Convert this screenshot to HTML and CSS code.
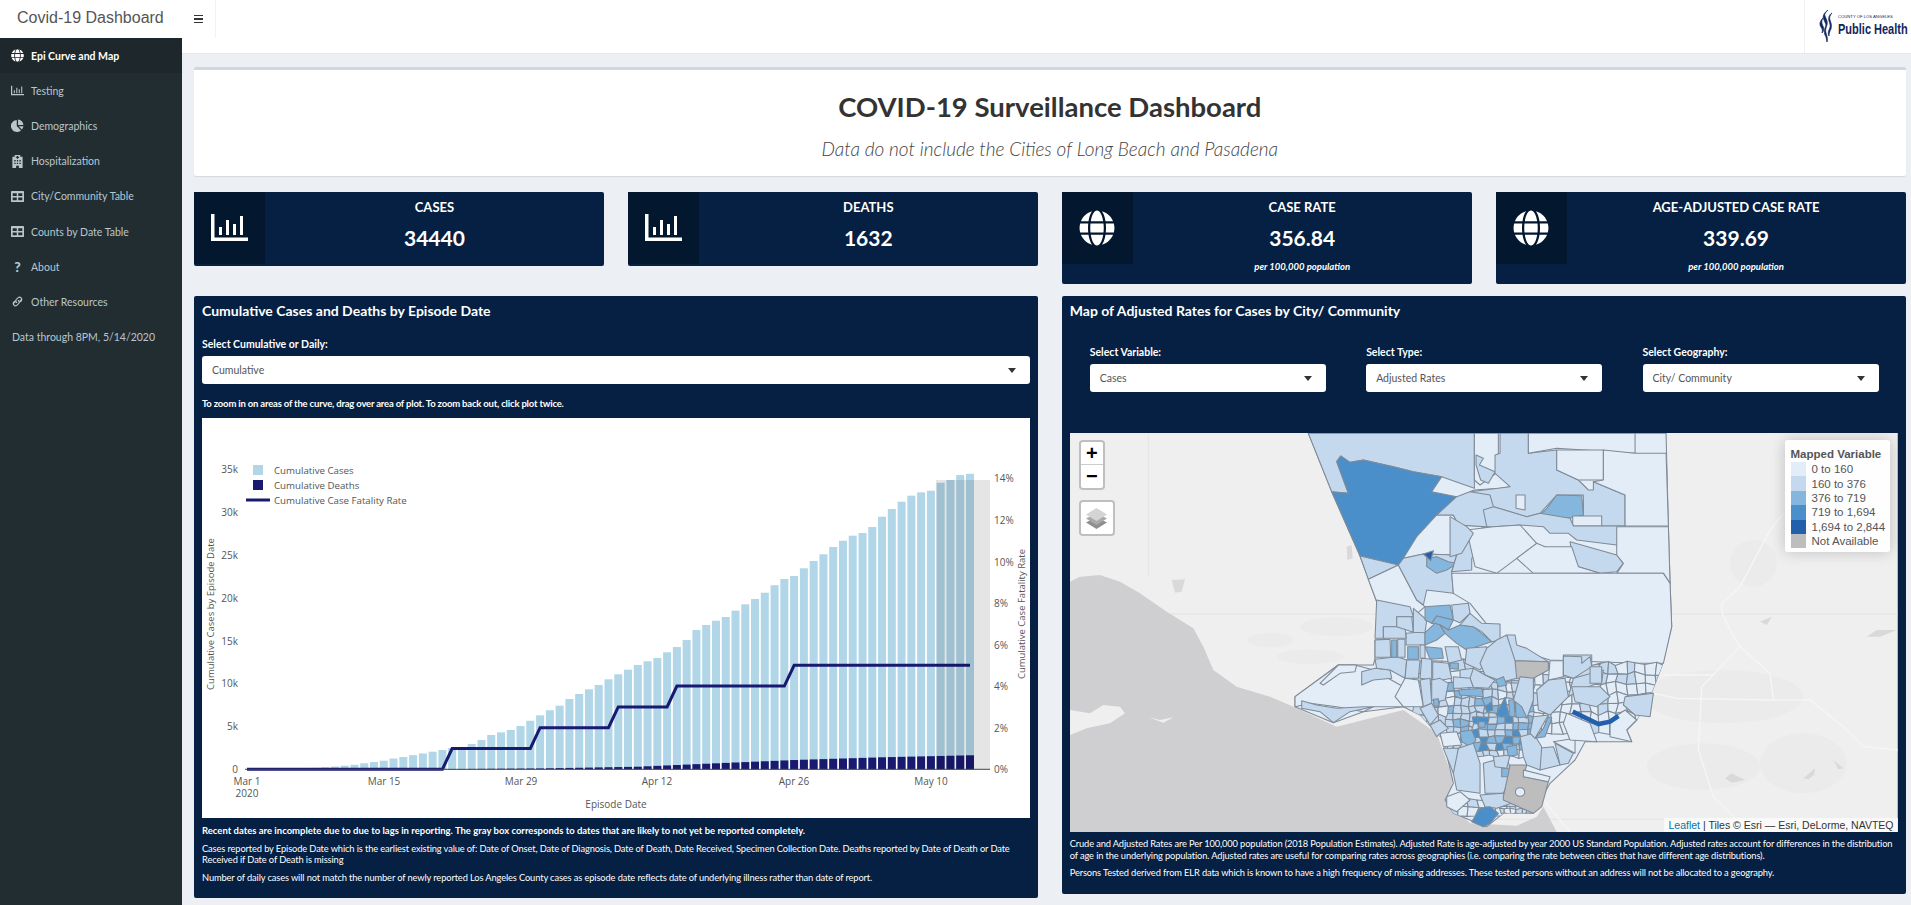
FILE: index.html
```html
<!DOCTYPE html>
<html lang="en">
<head>
    <meta charset="UTF-8">
    <meta name="viewport" content="width=device-width, initial-scale=1.0">
    <title>Covid-19 Dashboard</title>
    <link rel="stylesheet" href="styles.css">
</head>
<body>
<svg class="icon-defs" width="0" height="0">
    <symbol id="i-globe" viewBox="0 0 496 512"><path d="M336.5 160C322 70.7 287.8 8 248 8s-74 62.7-88.5 152h177zM152 256c0 22.2 1.2 43.5 3.3 64h185.3c2.1-20.5 3.3-41.8 3.3-64s-1.2-43.5-3.3-64H155.3c-2.1 20.5-3.3 41.8-3.3 64zm324.7-96c-28.6-67.9-86.5-120.4-158-141.6 24.4 33.8 41.2 84.7 50 141.6h108zM177.2 18.4C105.8 39.6 47.8 92.1 19.3 160h108c8.7-56.9 25.5-107.8 49.9-141.6zM487.4 192H372.7c2.1 21 3.3 42.5 3.3 64s-1.2 43-3.3 64h114.6c5.5-20.5 8.6-41.8 8.6-64s-3.1-43.5-8.5-64zM120 256c0-21.5 1.2-43 3.3-64H8.6C3.2 212.5 0 233.8 0 256s3.2 43.5 8.6 64h114.6c-2-21-3.2-42.5-3.2-64zm39.5 96c14.5 89.3 48.7 152 88.5 152s74-62.7 88.5-152h-177zm159.3 141.6c71.4-21.2 129.4-73.7 158-141.6h-108c-8.8 56.9-25.6 107.8-50 141.6zM19.3 352c28.6 67.9 86.5 120.4 158 141.6-24.4-33.8-41.2-84.7-50-141.6h-108z"/></symbol>
    <symbol id="i-bars" viewBox="0 0 37 27"><path d="M0 0h3.5v23.5H37V27H0zM8 13h3v8H8zM15 6h3v15h-3zM22 10h3v11h-3zM29 2h3v19h-3z"/></symbol>
    <symbol id="i-pie" viewBox="0 0 14 14"><path d="M6.2 1v6.6l4.6 4.7A6.5 6.5 0 1 1 6.2 1zM7.6.6a6 6 0 0 1 5.8 5.8H7.6zM8.2 7.8h5.2a6.4 6.4 0 0 1-1.7 3.6z"/></symbol>
    <symbol id="i-hospital" viewBox="0 0 12 14"><path d="M3 0h6v2h2.500v12H7.500v-2.500h-3V14H.5V2H3zM5.300 1v1H4.200v1h1.100v1h1.400V3h1.100V2H6.700V1zM2.500 5.500v1.500h1.500V5.500zm2.800 0v1.500h1.400V5.500zm2.700 0v1.500h1.500V5.500zM2.500 8.300v1.500h1.500V8.300zm2.800 0v1.500h1.400V8.300zm2.700 0v1.500h1.500V8.300z"/></symbol>
    <symbol id="i-table" viewBox="0 0 14 12"><path d="M1 0h12a1 1 0 0 1 1 1v10a1 1 0 0 1-1 1H1a1 1 0 0 1-1-1V1a1 1 0 0 1 1-1zm.8 2.500v3h4.400v-3zm6 0v3h4.400v-3zm-6 4.500v3h4.400V7zm6 0v3h4.400V7z"/></symbol>
    <symbol id="i-link" viewBox="0 0 14 14"><path d="M8.600 5.400a3 3 0 0 1 0 4.200l-2 2a3 3 0 0 1-4.200-4.200l1.200-1.100c.3-.3.800 0 .8.400 0 .4.100.7.200 1l-.9 1a1.500 1.500 0 0 0 2.100 2.100l2-2a1.500 1.500 0 0 0-.3-2.300c-.5-.5 0-1.400 1.100-1.100zM5.400 8.600a3 3 0 0 1 0-4.200l2-2a3 3 0 0 1 4.200 4.200l-1.200 1.100c-.3.300-.8 0-.8-.4 0-.4-.1-.7-.2-1l.9-1a1.500 1.500 0 0 0-2.100-2.100l-2 2a1.500 1.500 0 0 0 .3 2.300c.5.500 0 1.400-1.100 1.100z"/></symbol>
</svg>

<div class="app">
    <aside class="side">
        <div class="brand">Covid-19 Dashboard</div>
        <nav class="side-menu">
            <a class="side-link active" href="#"><svg class="side-icon"><use href="#i-globe"/></svg>Epi Curve and Map</a>
            <a class="side-link" href="#"><svg class="side-icon"><use href="#i-bars"/></svg>Testing</a>
            <a class="side-link" href="#"><svg class="side-icon"><use href="#i-pie"/></svg>Demographics</a>
            <a class="side-link" href="#"><svg class="side-icon"><use href="#i-hospital"/></svg>Hospitalization</a>
            <a class="side-link" href="#"><svg class="side-icon"><use href="#i-table"/></svg>City/Community Table</a>
            <a class="side-link" href="#"><svg class="side-icon"><use href="#i-table"/></svg>Counts by Date Table</a>
            <a class="side-link" href="#"><span class="side-icon side-glyph">?</span>About</a>
            <a class="side-link" href="#"><svg class="side-icon"><use href="#i-link"/></svg>Other Resources</a>
            <div class="side-date">Data through 8PM, 5/14/2020</div>
        </nav>
    </aside>

    <div class="page">
        <header class="navbar">
            <a class="toggle" href="#"><span class="burger"></span></a>
            <div class="logo">
                <svg class="logo-mark" viewBox="0 0 14 32">
                    <path d="M9 0C5 3 3 6 5 10c1 3 3 4 1 8-1 3-1 6 1 9l1 5c1-3 0-6-1-9-1-3 0-5 1-8 1-4-1-6-2-9C5 4 7 2 9 0z"/>
                    <path d="M13 3c-3 2-4 5-3 8 1 3 2 5 0 9-1 2-1 4 0 6 0-3 1-5 2-7 1-4 0-6-1-9-1-2 0-5 2-7z"/>
                    <path d="M4 8C1 11 0 14 2 17c1 2 2 3 1 6 2-2 2-4 1-7-1-2-2-5 0-8z"/>
                </svg>
                <div class="logo-text">
                    <div class="logo-small">COUNTY OF LOS ANGELES</div>
                    <div class="logo-big">Public Health</div>
                </div>
            </div>
        </header>

        <main class="content">
            <section class="title-box">
                <h1>COVID-19 Surveillance Dashboard</h1>
                <p>Data do not include the Cities of Long Beach and Pasadena</p>
            </section>

            <div class="stat">
                <div class="stat-icon"><svg class="bars-icon"><use href="#i-bars"/></svg></div>
                <div class="stat-body">
                    <div class="stat-label">CASES</div>
                    <div class="stat-num">34440</div>
                </div>
            </div>
            <div class="stat">
                <div class="stat-icon"><svg class="bars-icon"><use href="#i-bars"/></svg></div>
                <div class="stat-body">
                    <div class="stat-label">DEATHS</div>
                    <div class="stat-num">1632</div>
                </div>
            </div>
            <div class="stat">
                <div class="stat-icon"><svg class="globe-icon"><use href="#i-globe"/></svg></div>
                <div class="stat-body">
                    <div class="stat-label">CASE RATE</div>
                    <div class="stat-num">356.84</div>
                    <div class="stat-note">per 100,000 population</div>
                </div>
            </div>
            <div class="stat">
                <div class="stat-icon"><svg class="globe-icon"><use href="#i-globe"/></svg></div>
                <div class="stat-body">
                    <div class="stat-label">AGE-ADJUSTED CASE RATE</div>
                    <div class="stat-num">339.69</div>
                    <div class="stat-note">per 100,000 population</div>
                </div>
            </div>

            <section class="panel">
                <h3>Cumulative Cases and Deaths by Episode Date</h3>
                <label class="field-label">Select Cumulative or Daily:</label>
                <div class="select"><span>Cumulative</span><i class="caret"></i></div>
                <p class="hint">To zoom in on areas of the curve, drag over area of plot. To zoom back out, click plot twice.</p>

                <svg id="chart" class="chart" viewBox="202 418 828 400">
                    <g id="bars"></g>
                    <polyline id="rate-line" class="rate-line" points=""></polyline>
                    <rect class="gray-box" x="936" y="480" width="54" height="289.3"></rect>
                    <line class="axis-line" x1="245" y1="769.3" x2="990" y2="769.3"></line>

                    <g class="tick-left">
                        <text x="238" y="773">0</text>
                        <text x="238" y="730">5k</text>
                        <text x="238" y="687">10k</text>
                        <text x="238" y="644.5">15k</text>
                        <text x="238" y="601.5">20k</text>
                        <text x="238" y="558.5">25k</text>
                        <text x="238" y="515.5">30k</text>
                        <text x="238" y="473">35k</text>
                    </g>
                    <g class="tick-right">
                        <text x="994" y="773">0%</text>
                        <text x="994" y="731.5">2%</text>
                        <text x="994" y="690">4%</text>
                        <text x="994" y="648.5">6%</text>
                        <text x="994" y="607">8%</text>
                        <text x="994" y="565.5">10%</text>
                        <text x="994" y="523.5">12%</text>
                        <text x="994" y="482">14%</text>
                    </g>
                    <g class="tick-x">
                        <text x="247" y="785">Mar 1</text>
                        <text x="247" y="797">2020</text>
                        <text x="384" y="785">Mar 15</text>
                        <text x="521" y="785">Mar 29</text>
                        <text x="657" y="785">Apr 12</text>
                        <text x="794" y="785">Apr 26</text>
                        <text x="931" y="785">May 10</text>
                        <text x="616" y="807.5">Episode Date</text>
                    </g>
                    <text class="axis-title" transform="translate(214 614) rotate(-90)">Cumulative Cases by Episode Date</text>
                    <text class="axis-title" transform="translate(1025 614) rotate(-90)">Cumulative Case Fatality Rate</text>

                    <rect class="bar-cases" x="253" y="465" width="10" height="10"></rect>
                    <rect class="bar-deaths" x="253" y="480" width="10" height="10"></rect>
                    <line class="rate-line" x1="246" y1="500" x2="270" y2="500"></line>
                    <g class="legend-text">
                        <text x="274" y="473.5">Cumulative Cases</text>
                        <text x="274" y="489">Cumulative Deaths</text>
                        <text x="274" y="504">Cumulative Case Fatality Rate</text>
                    </g>
                </svg>

                <div class="notes">
                    <p class="strong">Recent dates are incomplete due to due to lags in reporting. The gray box corresponds to dates that are likely to not yet be reported completely.</p>
                    <p>Cases reported by Episode Date which is the earliest existing value of: Date of Onset, Date of Diagnosis, Date of Death, Date Received, Specimen Collection Date. Deaths reported by Date of Death or Date Received if Date of Death is missing</p>
                    <p>Number of daily cases will not match the number of newly reported Los Angeles County cases as episode date reflects date of underlying illness rather than date of report.</p>
                </div>
            </section>

            <section class="panel">
                <h3>Map of Adjusted Rates for Cases by City/ Community</h3>
                <div class="filters">
                    <div>
                        <label class="field-label">Select Variable:</label>
                        <div class="select"><span>Cases</span><i class="caret"></i></div>
                    </div>
                    <div>
                        <label class="field-label">Select Type:</label>
                        <div class="select"><span>Adjusted Rates</span><i class="caret"></i></div>
                    </div>
                    <div>
                        <label class="field-label">Select Geography:</label>
                        <div class="select"><span>City/ Community</span><i class="caret"></i></div>
                    </div>
                </div>

                <div class="map">
                    <!-- units are a third of a pixel, from the top left corner at 1070,430 -->
                    <svg class="map-svg" viewBox="0 9 2483 1197" preserveAspectRatio="none">
                        <defs>
                            <clipPath id="county">
                                <polygon points="715,10 1788,10 1795,290 1800,460 1805,590 1775,710 1740,800 1700,870 1670,900 1685,935 1545,935 1515,990 1440,1060 1390,1150 1300,1150 1250,1190 1150,1150 1125,1110 1150,1060 1120,930 1050,855 1000,830 880,845 790,878 675,830 675,800 805,705 910,705 915,685 915,630 945,628 945,590 918,510 870,378 785,185"></polygon>
                            </clipPath>
                        </defs>
                        <rect class="land" x="0" y="0" width="2483" height="1210"></rect>
                        <g class="land-patch">
                            <ellipse cx="600" cy="630" rx="70" ry="22"></ellipse>
                            <ellipse cx="800" cy="590" rx="110" ry="28"></ellipse>
                            <ellipse cx="720" cy="680" rx="100" ry="22"></ellipse>
                            <ellipse cx="1960" cy="800" rx="240" ry="80"></ellipse>
                            <ellipse cx="1900" cy="1010" rx="170" ry="70"></ellipse>
                            <ellipse cx="2200" cy="1000" rx="130" ry="90"></ellipse>
                            <ellipse cx="2050" cy="400" rx="70" ry="70"></ellipse>
                        </g>
                        <polyline class="grid-line" points="0,552 2483,552"></polyline>
                        <polyline class="grid-line" points="0,1168 2483,1168"></polyline>
                        <polyline class="grid-line" points="235,10 235,440"></polyline>
                        <polygon class="ocean" points="0,455 30,440 90,435 150,455 210,490 290,545 370,595 400,650 430,720 500,770 600,800 670,830 800,890 1000,840 1100,910 1150,1050 1130,1110 1200,1180 1400,1190 1420,1150 1440,1206 0,1206"></polygon>
                        <polygon class="land" points="0,840 60,850 100,825 150,830 165,850 120,880 50,895 0,915"></polygon>
                        <polygon class="land" points="235,862 270,870 310,862 280,878"></polygon>
                        <polygon class="ocean" points="1300,1206 1400,1160 1420,1130 1460,1206"></polygon>
                        <g class="roads">
                            <polyline points="2140,250 2100,300 2010,470 1955,520 1955,545 1980,600 2010,650 2100,730 2110,810 2220,810 2320,890 2380,950 2483,960"></polyline>
                            <polyline points="2010,650 1895,770 1885,960 1930,1100 2010,1180"></polyline>
                            <polyline points="1750,790 1820,805 2110,810"></polyline>
                            <polyline points="1780,735 1930,735"></polyline>
                            <polyline points="1420,1110 1500,1206"></polyline>
                        </g>
                        <g class="lakes">
                            <polygon points="305,450 345,448 335,485 315,488"></polygon>
                            <polygon points="830,350 845,345 848,385 832,390"></polygon>
                            <polygon points="1965,1045 1985,1030 2005,1040 2025,1050 1985,1058"></polygon>
                            <polygon points="2200,1045 2235,1015 2232,1035 2215,1048"></polygon>
                            <polygon points="2290,990 2320,1015 2305,1018"></polygon>
                            <polygon points="2390,620 2420,600 2480,600 2430,620"></polygon>
                            <polygon points="2070,575 2105,560 2090,585"></polygon>
                        </g>

                        <g class="regions">
                            <polygon class="c1" points="715,10 1788,10 1795,290 1800,460 1805,590 1775,710 1740,800 1700,870 1670,900 1685,935 1545,935 1515,990 1440,1060 1390,1150 1300,1150 1250,1190 1150,1150 1125,1110 1150,1060 1120,930 1050,855 1000,830 880,845 790,878 675,830 675,800 805,705 910,705 915,685 915,630 945,628 945,590 918,510 870,378 785,185"></polygon>

                            <polygon class="c2" points="715,10 1213,10 1213,175 1115,140 1030,125 970,110 880,90 840,97 812,78 800,95 835,190 785,185"></polygon>
                            <polygon class="c4" points="785,185 835,190 800,95 812,78 840,97 880,90 970,110 1030,125 1115,140 1085,185 1160,200 1100,255 1040,320 1020,360 985,405 870,378"></polygon>
                            <polygon class="c2" points="870,378 985,405 895,448"></polygon>
                            <polygon class="c1" points="895,448 985,405 1040,510 1065,530 1030,560 945,560 918,510"></polygon>
                            <polygon class="c1" points="1040,320 1100,255 1150,255 1165,285 1250,290 1200,305 1160,375 1060,372 1000,385"></polygon>
                            <polygon class="c2" points="985,405 1000,385 1060,372 1160,375 1145,425 1150,490 1070,480 1060,525 1040,510"></polygon>
                            <polygon class="c3" points="1070,385 1100,380 1135,395 1160,400 1130,420 1100,430 1070,410"></polygon>
                            <polygon class="c5" points="1060,372 1090,362 1082,392"></polygon>
                            <polygon class="c2" points="1160,375 1200,305 1250,290 1285,345 1205,385 1205,420 1145,425"></polygon>
                            <polygon class="c1" points="1213,10 1285,10 1285,125 1230,165 1213,150"></polygon>
                            <polygon class="c2" points="1218,75 1240,85 1228,105 1275,125 1255,160 1232,150 1218,105"></polygon>
                            <polygon class="c2" points="1160,200 1213,180 1290,175 1320,170 1320,240 1250,290 1165,285 1150,255 1100,255"></polygon>
                            <polygon class="c2" points="1290,10 1375,10 1375,70 1460,60 1460,120 1525,150 1555,180 1570,180 1570,155 1665,195 1665,288 1510,288 1510,260 1540,255 1540,195 1460,195 1410,250 1370,260 1270,230 1260,195 1200,185 1320,170 1275,130 1275,75 1290,70"></polygon>
                            <polygon class="c3" points="1460,195 1535,197 1540,255 1500,265 1410,255 1430,235"></polygon>
                            <polygon class="c1" points="1338,195 1365,195 1365,240 1338,235"></polygon>
                            <polygon class="c1" points="1508,258 1595,258 1595,288 1508,288"></polygon>
                            <polygon class="c1" points="1375,10 1695,10 1695,70 1460,55 1375,70"></polygon>
                            <polygon class="c1" points="1460,60 1600,60 1600,150 1525,150 1460,120"></polygon>
                            <polygon class="c1" points="1600,60 1695,70 1788,70 1795,288 1665,288 1665,195 1570,155 1600,150"></polygon>
                            <polygon class="c2" points="1510,288 1665,288 1640,345 1520,330 1495,310 1440,310 1420,290 1350,285 1270,290 1250,290 1240,240 1270,230 1370,260 1410,250 1500,265"></polygon>
                            <polygon class="c2" points="1500,335 1640,375 1660,400 1640,425 1590,430 1525,410 1505,370"></polygon>
                            <polygon class="c1" points="1640,290 1795,290 1800,460 1780,430 1640,430 1660,400 1640,375 1640,345"></polygon>
                            <polygon class="c1" points="1190,300 1270,290 1350,285 1400,340 1340,385 1280,430 1215,410"></polygon>
                            <polygon class="c2" points="1140,260 1190,290 1210,310 1175,370 1140,380"></polygon>
                            <polygon class="c1" points="1340,385 1400,340 1425,350 1505,350 1525,410 1590,430 1390,430"></polygon>
                            <polygon class="c1" points="1145,430 1780,430 1800,460 1805,590 1780,700 1700,700 1440,690 1340,660 1280,620 1200,520 1150,490"></polygon>

                            <g id="cells" clip-path="url(#county)"></g>

                            <g transform="translate(510 510)">
                                <!-- malibu and the valley -->
                                <polygon class="c1" points="165,290 295,195 345,195 400,210 490,260 490,320 400,320 370,335 290,320 210,310 165,320"></polygon>
                                <polygon class="c2" points="185,302 230,315 290,325 370,320 400,320 330,335 280,368 240,335 185,325"></polygon>
                                <polygon class="c2" points="365,215 405,205 450,210 455,235 400,240 365,255"></polygon>
                                <polygon class="c1" points="240,250 295,195 350,195 345,215 300,220 250,255"></polygon>
                                <polygon class="c2" points="405,178 470,170 500,180 495,235 450,210 410,205"></polygon>
                                <polygon class="c1" points="465,290 495,235 535,240 550,320 490,320"></polygon>
                                <polygon class="c2" points="410,0 510,20 520,50 470,50 470,80 430,80 430,115 405,115"></polygon>
                                <polygon class="c2" points="405,120 450,118 452,172 405,172"></polygon>
                                <polygon class="c3" points="455,120 470,120 470,172 455,172"></polygon>
                                <polygon class="c2" points="473,118 495,118 495,172 473,172"></polygon>
                                <polygon class="c2" points="498,100 555,95 555,135 498,135"></polygon>
                                <polygon class="c3" points="503,140 535,140 535,178 503,178"></polygon>
                                <polygon class="c2" points="540,135 555,135 555,175 540,175"></polygon>
                                <polygon class="c2" points="430,80 495,80 498,115 430,115"></polygon>
                                <polygon class="c2" points="470,50 515,50 520,97 470,80"></polygon>
                                <polygon class="c2" points="520,25 560,60 555,98 520,97"></polygon>
                                <polygon class="c3" points="555,20 630,15 640,60 590,48 575,70 555,60"></polygon>
                                <polygon class="c3" points="575,70 590,48 640,60 625,90 600,75"></polygon>
                                <polygon class="c3" points="555,98 585,70 600,75 615,100 590,120 555,135"></polygon>
                                <polygon class="c3" points="600,75 625,90 660,75 700,80 755,125 680,150 650,130 615,100"></polygon>
                                <polygon class="c2" points="635,15 685,10 690,40 660,68 640,60"></polygon>
                                <polygon class="c2" points="690,40 725,70 780,72 780,120 755,125 725,95 700,80 660,75"></polygon>
                                <polygon class="c2" points="615,140 655,140 665,180 625,190"></polygon>
                                <polygon class="c2" points="680,145 740,140 745,175 720,210 675,190"></polygon>
                                <polygon class="c3" points="555,140 605,145 610,175 570,178"></polygon>
                                <polygon class="c2" points="500,180 540,180 535,235 495,235"></polygon>
                                <polygon class="c2" points="545,175 575,178 575,240 540,235"></polygon>
                                <polygon class="c2" points="578,185 625,190 635,235 578,245"></polygon>
                                <polygon class="c3" points="630,188 655,190 655,208 630,205"></polygon>
                                <polygon class="c2" points="660,210 700,205 715,240 680,260 660,245"></polygon>

                                <!-- coast and south bay -->
                                <polygon class="c2" points="540,240 570,235 575,310 550,320"></polygon>
                                <polygon class="c2" points="575,240 600,235 625,250 615,300 590,305 575,300"></polygon>
                                <polygon class="c3" points="580,298 595,296 597,318 582,318"></polygon>
                                <polygon class="c2" points="540,325 575,310 595,345 570,375"></polygon>
                                <polygon class="c1" points="600,400 650,395 665,435 610,440"></polygon>
                                <polygon class="c2" points="570,375 600,360 625,385 600,400 590,410"></polygon>
                                <polygon class="c3" points="660,395 695,390 708,420 690,440 665,425"></polygon>
                                <polygon class="c2" points="610,445 655,445 655,520 640,520"></polygon>
                                <polygon class="c2" points="655,445 700,430 720,490 720,580 650,570 640,520"></polygon>
                                <polygon class="c2" points="730,490 800,470 815,520 790,580 735,580"></polygon>
                                <polygon class="c3" points="785,505 810,505 810,530 785,530"></polygon>
                                <polygon class="c2" points="760,470 810,465 800,505 765,500"></polygon>
                                <polygon class="c1" points="620,590 660,575 690,600 650,635 620,620"></polygon>
                                <polygon class="c2" points="720,585 790,580 815,610 770,625 735,620"></polygon>
                                <polygon class="c4" points="695,665 720,625 750,620 775,640 750,670 730,680"></polygon>
                                <polygon class="na" points="810,495 860,495 850,530 925,545 905,620 880,640 790,600 790,590 805,520"></polygon>
                                <ellipse class="c1" cx="840" cy="576" rx="14" ry="13"></ellipse>
                                <polygon class="c1" points="850,510 930,530 925,545 850,530"></polygon>

                                <!-- east side -->
                                <polygon class="c2" points="895,445 940,440 960,495 900,510"></polygon>
                                <polygon class="c2" points="945,430 1000,460 985,490 960,495"></polygon>
                                <polygon class="c1" points="940,425 1005,415 1005,460"></polygon>
                                <polygon class="c2" points="840,410 880,400 905,440 900,510 860,495 850,470"></polygon>
                                <polygon class="c3" points="800,440 830,436 832,465 805,468"></polygon>
                                <polygon class="c2" points="770,120 800,105 840,180 830,235 790,245 735,225 720,190 740,145"></polygon>
                                <polygon class="c2" points="800,105 825,105 830,135 860,145 900,170 925,185 825,182"></polygon>
                                <polygon class="na" points="825,182 925,185 925,210 870,240 830,235"></polygon>
                                <polygon class="c3" points="767,240 790,230 800,255 775,260"></polygon>
                                <polygon class="c2" points="700,205 735,225 765,240 745,265 700,262 690,235"></polygon>
                                <polygon class="c2" points="640,230 690,235 700,262 660,265 640,265"></polygon>
                                <polygon class="c3" points="655,270 725,265 730,290 660,285"></polygon>
                                <polygon class="c2" points="840,230 880,235 880,300 860,355 835,340 820,300"></polygon>
                                <polygon class="c2" points="880,350 925,345 885,415 870,400"></polygon>
                                <polygon class="c3" points="910,385 925,350 935,355 915,410 885,415"></polygon>
                                <polygon class="c2" points="925,240 975,235 985,290 930,345 895,330 890,270"></polygon>
                                <polygon class="c1" points="930,182 970,182 970,230 925,240"></polygon>
                                <polygon class="c2" points="970,165 1055,165 1055,225 1000,235 970,230"></polygon>
                                <polygon class="c2" points="1000,235 1090,210 1085,245 1020,270 985,290"></polygon>
                                <polygon class="c4" points="768,345 795,292 806,345 785,352"></polygon>
                                <polygon class="c3" points="806,300 822,300 825,350 808,348"></polygon>
                                <polygon class="c3" points="826,305 845,320 860,352 828,352"></polygon>
                                <polygon class="c3" points="716,365 735,365 735,382 716,382"></polygon>
                                <polygon class="c4" points="735,320 755,305 758,330 740,335"></polygon>
                            </g>

                            <g transform="translate(1140 0)">
                                <polygon class="c2" points="340,678 395,680 395,700 420,680 425,710 370,745 340,735"></polygon>
                                <polygon class="c2" points="420,710 455,710 455,760 420,760"></polygon>
                                <polygon class="c2" points="525,800 610,790 600,860 555,855 520,825"></polygon>
                                <polygon class="c2" points="365,770 450,770 480,800 440,830 375,815"></polygon>
                                <polygon class="c1" points="350,850 420,880 440,935 360,930 340,880"></polygon>
                                <polygon class="c1" points="480,870 525,840 560,870 530,900 545,935 480,920"></polygon>
                                <polyline class="river" points="368,845 420,870 445,882 480,875 505,858"></polyline>
                            </g>
                        </g>
                    </svg>

                    <div class="zoom-ctl">
                        <a href="#">+</a>
                        <a href="#">&minus;</a>
                    </div>
                    <div class="layers-ctl">
                        <svg class="layers-icon" viewBox="0 0 21 21">
                            <polygon class="layer-low" points="10.5,9 21,14.5 10.5,21 0,14.5"></polygon>
                            <polygon class="layer-mid" points="10.5,5 21,10.5 10.5,17 0,10.5"></polygon>
                            <polygon class="layer-top" points="10.5,0 21,6.5 10.5,13 0,6.5"></polygon>
                        </svg>
                    </div>
                    <div class="legend">
                        <div class="legend-title">Mapped Variable</div>
                        <div class="legend-row"><i class="sw-1"></i>0 to 160</div>
                        <div class="legend-row"><i class="sw-2"></i>160 to 376</div>
                        <div class="legend-row"><i class="sw-3"></i>376 to 719</div>
                        <div class="legend-row"><i class="sw-4"></i>719 to 1,694</div>
                        <div class="legend-row"><i class="sw-5"></i>1,694 to 2,844</div>
                        <div class="legend-row"><i class="sw-na"></i>Not Available</div>
                    </div>
                    <div class="attribution"><a href="#">Leaflet</a> | Tiles &copy; Esri &mdash; Esri, DeLorme, NAVTEQ</div>
                </div>

                <div class="notes map-notes">
                    <p>Crude and Adjusted Rates are Per 100,000 population (2018 Population Estimates). Adjusted Rate is age-adjusted by year 2000 US Standard Population. Adjusted rates account for differences in the distribution of age in the underlying population. Adjusted rates are useful for comparing rates across geographies (i.e. comparing the rate between cities that have different age distributions).</p>
                    <p>Persons Tested derived from ELR data which is known to have a high frequency of missing addresses. These tested persons without an address will not be allocated to a geography.</p>
                </div>
            </section>
        </main>
    </div>
</div>
<script src="script.js"></script>
</body>
</html>
```

FILE: styles.css
```css
* {
    box-sizing: border-box;
}

body {
    font-family: "Lato", "Liberation Sans", sans-serif;
    background-color: #ecf0f5;
    margin: 0;
    padding: 0;
    height: 905px;
    overflow: hidden;
}

a {
    text-decoration: none;
}

.icon-defs {
    position: absolute;
}

.app {
    display: grid;
    grid-template-columns: 182px 1fr;
    height: 905px;
}

/* sidebar */
.side {
    display: flex;
    flex-direction: column;
}

.brand {
    height: 38px;
    line-height: 35px;
    padding-left: 17px;
    background-color: #fff;
    color: #555;
    font-family: "Liberation Sans", sans-serif;
    font-size: 16px;
}

.side-menu {
    flex: 1;
    background-color: #222d32;
}

.side-link {
    display: flex;
    align-items: center;
    height: 35.2px;
    padding-left: 11px;
    color: #b8c7ce;
    font-size: 10.5px;
}

.side-link.active {
    background-color: #1e282c;
    color: #fff;
    font-weight: bold;
}

.side-icon {
    width: 13px;
    height: 13px;
    margin-right: 7px;
    fill: currentColor;
}

.side-glyph {
    font-size: 14px;
    font-weight: 900;
    line-height: 13px;
    text-align: center;
}

.side-date {
    height: 35px;
    line-height: 35px;
    padding-left: 12px;
    color: #b8c7ce;
    font-size: 10.5px;
}

/* top bar */
.navbar {
    display: flex;
    justify-content: space-between;
    height: 54px;
    background-color: #fff;
    border-bottom: 1px solid #e4e7ec;
}

.toggle {
    display: flex;
    align-items: center;
    justify-content: center;
    width: 34px;
    height: 38px;
    border-right: 1px solid #f2f2f2;
}

.burger {
    width: 9px;
    height: 8px;
    border-top: 1.5px solid #333;
    border-bottom: 1.5px solid #333;
    position: relative;
}

.burger::after {
    content: "";
    position: absolute;
    left: 0;
    right: 0;
    top: 2px;
    height: 1.5px;
    background-color: #333;
}

.logo {
    display: flex;
    width: 107px;
    padding: 10px 0 0 14px;
    border-left: 1px solid #f0f0f0;
}

.logo-mark {
    width: 14px;
    height: 32px;
    fill: #12265e;
    stroke: #12265e;
    stroke-width: 0.7;
}

.logo-text {
    margin-left: 5px;
    color: #12265e;
    font-family: "Liberation Sans", sans-serif;
    white-space: nowrap;
}

.logo-small {
    margin-top: 4px;
    font-size: 4.2px;
    line-height: 6px;
}

.logo-big {
    font-size: 11px;
    font-weight: bold;
    line-height: 13px;
    transform: scaleY(1.4);
    transform-origin: left top;
}

/* content grid */
.content {
    display: grid;
    grid-template-columns: repeat(4, 1fr);
    grid-auto-rows: min-content;
    column-gap: 24px;
    row-gap: 12px;
    align-items: start;
    padding: 13px 5.5px 0 12px;
}

.title-box {
    grid-column: span 4;
    height: 109px;
    margin-bottom: 4px;
    padding-top: 19px;
    background-color: #fff;
    border-top: 3px solid #d2d6de;
    border-radius: 2px;
    box-shadow: 0 1px 1px rgba(0, 0, 0, 0.1);
    text-align: center;
}

.title-box h1 {
    margin: 0;
    color: #333;
    font-size: 27.5px;
    font-weight: bold;
    line-height: 36px;
}

.title-box p {
    margin: 11px 0 0;
    color: #444;
    font-size: 19px;
    font-style: italic;
    font-weight: 300;
    line-height: 26px;
}

.stat {
    display: flex;
    align-items: flex-start;
    min-height: 74px;
    background-color: #052042;
    border-radius: 2px;
    color: #fff;
}

.stat-icon {
    display: flex;
    align-items: center;
    justify-content: center;
    flex: 0 0 71px;
    height: 72px;
    background-color: #03172f;
}

.bars-icon {
    width: 37px;
    height: 27px;
    margin-top: -1px;
    fill: #fff;
}

.globe-icon {
    width: 36px;
    height: 36px;
    fill: #fff;
}

.stat-body {
    flex: 1;
    padding-top: 7px;
    text-align: center;
}

.stat-label {
    font-size: 13px;
    font-weight: bold;
    line-height: 16px;
}

.stat-num {
    margin-top: 10px;
    font-size: 21px;
    font-weight: bold;
    line-height: 26px;
}

.stat-note {
    margin: 9px 0 10px;
    font-size: 9.5px;
    font-style: italic;
    font-weight: bold;
    line-height: 14px;
}

/* panels */
.panel {
    grid-column: span 2;
    padding: 0 8px;
    background-color: #052042;
    border-radius: 2px;
    color: #fff;
}

.panel h3 {
    margin: 0;
    font-size: 14px;
    font-weight: bold;
    line-height: 30px;
}

.field-label {
    display: block;
    margin-top: 11px;
    font-size: 10.5px;
    font-weight: bold;
    line-height: 14px;
}

.select {
    display: flex;
    align-items: center;
    justify-content: space-between;
    height: 28px;
    margin-top: 5px;
    padding: 0 14px 0 10px;
    background-color: #fff;
    border-radius: 3px;
    color: #555;
    font-size: 10.5px;
}

.caret {
    width: 0;
    height: 0;
    border-left: 4.5px solid transparent;
    border-right: 4.5px solid transparent;
    border-top: 5px solid #333;
}

.hint {
    margin: 13px 0 7px;
    font-size: 9.5px;
    font-weight: bold;
    letter-spacing: -0.19px;
    line-height: 14px;
}

.chart {
    display: block;
    width: 828px;
    height: 400px;
    background-color: #fff;
}

.bar-cases {
    fill: #b1d6e8;
}

.bar-deaths {
    fill: #191970;
}

.rate-line {
    fill: none;
    stroke: #191970;
    stroke-width: 3;
}

.gray-box {
    fill: rgba(0, 0, 0, 0.1);
}

.axis-line {
    stroke: #444;
    stroke-width: 1;
}

.chart text {
    font-family: "Open Sans", sans-serif;
    font-size: 10px;
    fill: #555;
}

.chart .axis-title {
    font-size: 9.5px;
}

.chart .legend-text text {
    font-size: 9.7px;
}

.tick-left text {
    text-anchor: end;
}

.tick-x text,
.axis-title {
    text-anchor: middle;
}

.notes {
    padding-bottom: 15px;
}

.notes p {
    margin: 6px 0 0;
    font-size: 9.3px;
    letter-spacing: -0.12px;
    line-height: 11.5px;
}

.notes p.strong {
    margin-top: 7px;
    font-size: 9.5px;
    font-weight: bold;
    letter-spacing: 0;
}

.map-notes p {
    letter-spacing: -0.13px;
}

/* map */
.filters {
    display: grid;
    grid-template-columns: repeat(3, 236px);
    justify-content: space-between;
    padding: 8px 19px 0 20px;
    margin-bottom: 41px;
}

.map {
    position: relative;
    height: 399px;
    overflow: hidden;
}

.map-svg {
    display: block;
    width: 100%;
    height: 100%;
}

.land {
    fill: #efefef;
}

.land-patch {
    fill: #ebebeb;
}

.ocean {
    fill: #cfcfd2;
}

.grid-line {
    fill: none;
    stroke: #e4e4e4;
    stroke-width: 3;
}

.roads polyline {
    fill: none;
    stroke: #f6f6f6;
    stroke-width: 4;
}

.lakes {
    fill: #d9d9d9;
}

.regions polygon,
.regions ellipse {
    stroke: #7f8a96;
    stroke-width: 3.2;
    stroke-linejoin: round;
}

.river {
    fill: none;
    stroke: #2260ac;
    stroke-width: 14;
}

.c1 { fill: #e3edf8; }
.c2 { fill: #c5d9ee; }
.c3 { fill: #85b6dd; }
.c4 { fill: #4a8fca; }
.c5 { fill: #2260ac; }
.na { fill: #bdbdbd; }

.zoom-ctl {
    position: absolute;
    left: 9px;
    top: 7px;
    width: 26px;
    background-color: #fff;
    border: 2px solid rgba(0, 0, 0, 0.25);
    border-radius: 4px;
}

.zoom-ctl a {
    display: block;
    height: 23px;
    color: #000;
    font-family: "Liberation Sans", sans-serif;
    font-size: 20px;
    font-weight: bold;
    line-height: 23px;
    text-align: center;
}

.zoom-ctl a:first-child {
    border-bottom: 1px solid #ccc;
}

.layers-ctl {
    position: absolute;
    left: 9px;
    top: 67px;
    display: flex;
    align-items: center;
    justify-content: center;
    width: 36px;
    height: 36px;
    background-color: #fff;
    border: 2px solid rgba(0, 0, 0, 0.25);
    border-radius: 4px;
}

.layers-icon {
    width: 21px;
    height: 21px;
}

.layer-low { fill: #8f8f8f; }
.layer-mid { fill: #a9a9a9; }
.layer-top { fill: #d4d4d4; }

.legend {
    position: absolute;
    right: 8px;
    top: 7px;
    width: 105px;
    height: 112px;
    padding: 6px;
    background-color: rgba(255, 255, 255, 0.9);
    border-radius: 3px;
    box-shadow: 0 0 15px rgba(0, 0, 0, 0.2);
    color: #555;
    font-family: "Liberation Sans", sans-serif;
    font-size: 11.5px;
    white-space: nowrap;
}

.legend-title {
    font-weight: bold;
    line-height: 16px;
}

.legend-row {
    display: flex;
    align-items: center;
    height: 14.4px;
}

.legend-row i {
    flex: 0 0 15px;
    height: 14.4px;
    margin-right: 6px;
}

.sw-1 { background-color: #e3edf8; }
.sw-2 { background-color: #c5d9ee; }
.sw-3 { background-color: #85b6dd; }
.sw-4 { background-color: #4a8fca; }
.sw-5 { background-color: #2260ac; }
.sw-na { background-color: #bdbdbd; }

.attribution {
    position: absolute;
    right: 0;
    bottom: 0;
    padding: 0 4px;
    background-color: rgba(255, 255, 255, 0.7);
    color: #333;
    font-family: "Liberation Sans", sans-serif;
    font-size: 10.5px;
    line-height: 14px;
}

.attribution a {
    color: #0078a8;
}
```

FILE: script.js
```js
// Cumulative cases per day from Mar 1 to May 14
const cases = [
    5, 10, 20, 30, 50, 80, 120, 170, 240, 320, 420, 530, 700, 850, 1000,
    1250, 1430, 1650, 1850, 2050, 2250, 2480, 2600, 2950, 3410, 4000, 4310, 4580, 5050, 5660,
    6290, 6880, 7410, 8190, 8780, 9320, 9830, 10490, 11070, 11610, 12160, 12590, 12970, 13640, 14250,
    15070, 16240, 16820, 17320, 17750, 18490, 19230, 19850, 20580, 21450, 22180, 22530, 23430, 24280, 25060,
    25910, 26640, 27230, 27540, 28240, 29440, 30340, 31190, 31890, 32280, 32470, 33400, 33720, 34300, 34440
];

// Deaths rise slowly, so a few known days are enough
const deathKnots = [[0, 0], [20, 20], [30, 100], [40, 300], [47, 650], [56, 1080], [65, 1400], [74, 1632]];

// Fatality rate steps as [day, percent]
const ratePoints = [[0, 0], [20, 0], [21, 1], [29, 1], [30, 2], [37, 2], [38, 3], [43, 3], [44, 4], [55, 4], [56, 5], [74, 5]];

const SVG_NS = "http://www.w3.org/2000/svg";
const baseY = 769.3;
const dayX = d => 247 + 9.77 * d;

function deathsOn(day) {
    for (let i = 1; i < deathKnots.length; i++) {
        const [d0, v0] = deathKnots[i - 1];
        const [d1, v1] = deathKnots[i];
        if (day <= d1) return v0 + (v1 - v0) * (day - d0) / (d1 - d0);
    }
    return 0;
}

function addRect(parent, cls, day, value) {
    const h = value * 0.00858;
    const r = document.createElementNS(SVG_NS, "rect");
    r.setAttribute("class", cls);
    r.setAttribute("x", dayX(day) - 4);
    r.setAttribute("y", baseY - h);
    r.setAttribute("width", 8);
    r.setAttribute("height", h);
    parent.appendChild(r);
}

const bars = document.getElementById("bars");
cases.forEach((v, d) => {
    addRect(bars, "bar-cases", d, v);
    addRect(bars, "bar-deaths", d, deathsOn(d));
});

document.getElementById("rate-line").setAttribute(
    "points",
    ratePoints.map(([d, p]) => dayX(d) + "," + (baseY - p * 20.8)).join(" ")
);

// Small tracts of the dense parts of the county, as jittered grids
let seed = 17;
function rand() {
    seed = (seed * 16807) % 2147483647;
    return (seed % 1000) / 1000;
}

function drawTracts(x0, y0, cols, rows, sizeX, sizeY, palette) {
    const layer = document.getElementById("cells");
    const grid = [];
    for (let j = 0; j <= rows; j++) {
        grid[j] = [];
        for (let i = 0; i <= cols; i++) {
            grid[j][i] = [
                x0 + i * sizeX + (rand() - 0.5) * sizeX * 0.5,
                y0 + j * sizeY + (rand() - 0.5) * sizeY * 0.5
            ];
        }
    }
    for (let j = 0; j < rows; j++) {
        for (let i = 0; i < cols; i++) {
            const p = document.createElementNS(SVG_NS, "polygon");
            const corners = [grid[j][i], grid[j][i + 1], grid[j + 1][i + 1], grid[j + 1][i]];
            p.setAttribute("points", corners.map(c => c.join(",")).join(" "));
            p.setAttribute("class", palette[Math.floor(rand() * palette.length)]);
            layer.appendChild(p);
        }
    }
}

drawTracts(1035, 690, 10, 7, 36, 34, ["c1", "c2", "c2", "c2"]);
drawTracts(1130, 760, 12, 10, 22, 22, ["c1", "c2", "c2", "c2", "c3"]);
drawTracts(1205, 860, 8, 5, 24, 20, ["c2", "c3", "c3", "c2", "c4"]);
drawTracts(1390, 700, 15, 7, 28, 30, ["c1", "c1", "c1", "c2"]);
drawTracts(1130, 1110, 7, 2, 30, 22, ["c1", "c1", "c2"]);
drawTracts(1290, 1135, 9, 1, 16, 16, ["c1", "c2", "c2"]);
```
